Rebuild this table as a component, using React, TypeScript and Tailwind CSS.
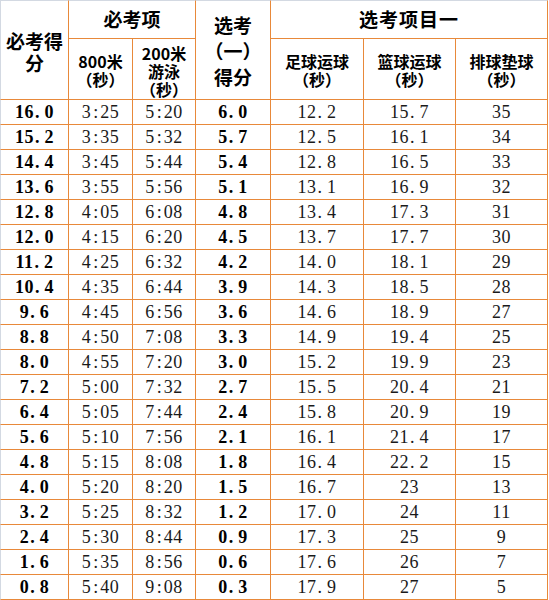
import React from 'react';

type Row = [string, string, string, string, string, string, string];

const rows: Row[] = [
  ['16.0', '3:25', '5:20', '6.0', '12.2', '15.7', '35'],
  ['15.2', '3:35', '5:32', '5.7', '12.5', '16.1', '34'],
  ['14.4', '3:45', '5:44', '5.4', '12.8', '16.5', '33'],
  ['13.6', '3:55', '5:56', '5.1', '13.1', '16.9', '32'],
  ['12.8', '4:05', '6:08', '4.8', '13.4', '17.3', '31'],
  ['12.0', '4:15', '6:20', '4.5', '13.7', '17.7', '30'],
  ['11.2', '4:25', '6:32', '4.2', '14.0', '18.1', '29'],
  ['10.4', '4:35', '6:44', '3.9', '14.3', '18.5', '28'],
  ['9.6', '4:45', '6:56', '3.6', '14.6', '18.9', '27'],
  ['8.8', '4:50', '7:08', '3.3', '14.9', '19.4', '25'],
  ['8.0', '4:55', '7:20', '3.0', '15.2', '19.9', '23'],
  ['7.2', '5:00', '7:32', '2.7', '15.5', '20.4', '21'],
  ['6.4', '5:05', '7:44', '2.4', '15.8', '20.9', '19'],
  ['5.6', '5:10', '7:56', '2.1', '16.1', '21.4', '17'],
  ['4.8', '5:15', '8:08', '1.8', '16.4', '22.2', '15'],
  ['4.0', '5:20', '8:20', '1.5', '16.7', '23', '13'],
  ['3.2', '5:25', '8:32', '1.2', '17.0', '24', '11'],
  ['2.4', '5:30', '8:44', '0.9', '17.3', '25', '9'],
  ['1.6', '5:35', '8:56', '0.6', '17.6', '26', '7'],
  ['0.8', '5:40', '9:08', '0.3', '17.9', '27', '5'],
];

// split a value so the dot / colon get the wide slot they have in the sheet
const Value: React.FC<{ text: string }> = ({ text }) => {
  const parts = text.split(/([.:])/);
  return (
    <span className="inline-flex items-baseline">
      {parts.map((p, i) =>
        p === '.' ? (
          <span key={i} className="pl-[1px] pr-[5px]">.</span>
        ) : p === ':' ? (
          <span key={i} className="px-[2px]">:</span>
        ) : (
          <span key={i} className="tracking-[0.5px]">{p}</span>
        )
      )}
    </span>
  );
};

const head = 'border-r border-b border-[#e8893a] flex flex-col items-center justify-center text-center font-bold text-black';

const App: React.FC = () => {
  return (
    <div className="w-[549px] h-[600px] bg-white overflow-hidden">
      <div
        className="grid grid-cols-[69px_64px_63px_75px_93px_92px_92px] grid-rows-[39px_61px] auto-rows-[25px] w-[548px]"
        style={{ fontFamily: '"Noto Sans CJK SC", sans-serif' }}
      >
        {/* Header */}
        <div className={`${head} row-span-2 border-l border-l-[#d3d9e2] border-t border-t-[#d3d9e2] text-[19px] leading-[22px] pt-[3px]`}>
          <span>必考得</span>
          <span>分</span>
        </div>
        <div className={`${head} col-span-2 border-t border-t-[#d3d9e2] text-[19px] leading-[22px] pb-[2px]`}>
          <span>必考项</span>
        </div>
        <div className={`${head} row-span-2 border-t border-t-[#d3d9e2] text-[19px] leading-[26px] pt-[2px]`}>
          <span>选考</span>
          <span>（一）</span>
          <span>得分</span>
        </div>
        <div className={`${head} col-span-3 border-t border-t-[#d3d9e2] text-[19px] leading-[22px] tracking-[1px] pb-[2px]`}>
          <span>选考项目一</span>
        </div>
        <div className={`${head} text-[16px] leading-[18px] pt-[2px]`}>
          <span>800米</span>
          <span>（秒）</span>
        </div>
        <div className={`${head} text-[16px] leading-[18px] pt-[4px]`}>
          <span>200米</span>
          <span>游泳</span>
          <span>（秒）</span>
        </div>
        <div className={`${head} text-[16px] leading-[18px] pt-[2px]`}>
          <span>足球运球</span>
          <span>（秒）</span>
        </div>
        <div className={`${head} text-[16px] leading-[18px] pt-[2px]`}>
          <span>篮球运球</span>
          <span>（秒）</span>
        </div>
        <div className={`${head} text-[16px] leading-[18px] pt-[2px]`}>
          <span>排球垫球</span>
          <span>（秒）</span>
        </div>

        {/* Data rows */}
        {rows.map((row, r) =>
          row.map((cell, c) => (
            <div
              key={`${r}-${c}`}
              className={`border-r border-b border-[#e8893a] flex items-center justify-center text-[18px] leading-none ${
                c === 0 ? 'border-l border-l-[#d3d9e2]' : ''
              } ${c === 0 || c === 3 ? 'font-bold text-black' : 'font-normal text-[#1a1a1a]'}`}
              style={{ fontFamily: '"Liberation Serif", serif' }}
            >
              <Value text={cell} />
            </div>
          ))
        )}
      </div>
    </div>
  );
};

export default App;
